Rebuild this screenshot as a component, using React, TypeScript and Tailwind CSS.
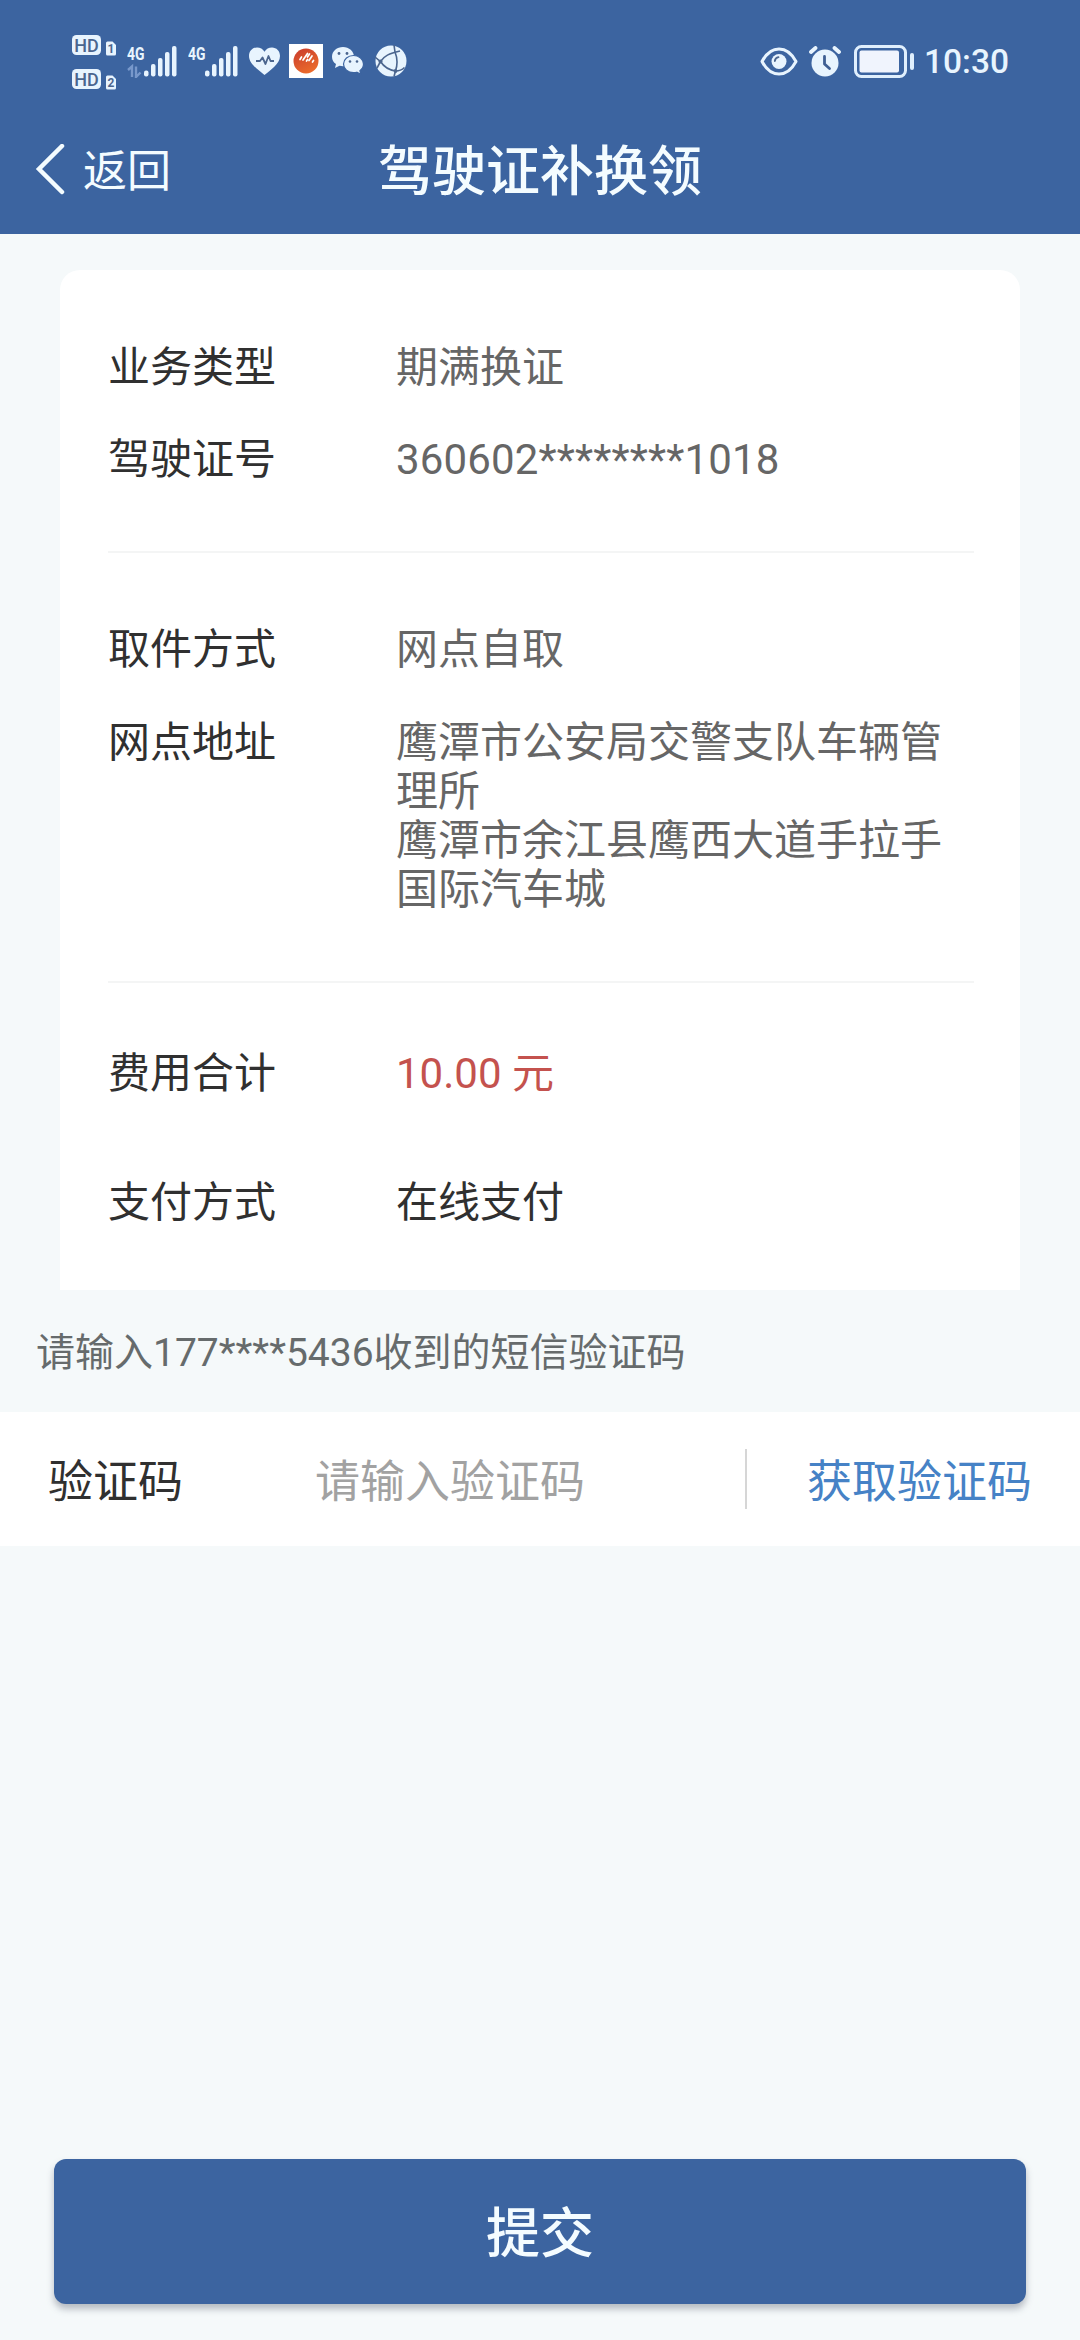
import React from "react";

const FONT = "font-[Roboto,'Noto_Sans_CJK_SC',sans-serif]";

function HdBadge({ sim }: { sim: string }) {
  return (
    <svg width="44" height="21" viewBox="0 0 44 21">
      <rect x="0" y="0" width="29" height="20" rx="4.5" fill="#e8f4fe" />
      <text x="14.500" y="16.500" textAnchor="middle" fontSize="18" fontWeight="500" fontFamily="Roboto, sans-serif" fill="#4b658e">HD</text>
      <path d="M35.500 6.500h5l3.500 3.500v9a1.500 1.500 0 0 1-1.500 1.500h-7a1.500 1.500 0 0 1-1.500-1.500v-11a1.500 1.500 0 0 1 1.500-1.500z" fill="#e8f4fe" />
      <text x="39" y="18" textAnchor="middle" fontSize="12" fontWeight="700" fontFamily="Roboto, sans-serif" fill="#4b658e">{sim}</text>
    </svg>
  );
}

function Signal({ traffic = false }: { traffic?: boolean }) {
  return (
    <svg width="51" height="38" viewBox="0 -6 51 38">
      <text x="0" y="14" fontSize="19" fontWeight="700" fontFamily="Roboto, sans-serif" fill="#e8f4fe" textLength="17.500" lengthAdjust="spacingAndGlyphs">4G</text>
      {traffic && (
        <path d="M1 24l4-3.500v10.500M9 20.500v10.500l4.500-4.500" fill="none" stroke="#7898cb" strokeWidth="2.400" />
      )}
      <g fill="#e8f4fe">
        <rect x="17" y="24.500" width="4.500" height="6" rx="2" />
        <rect x="24" y="18" width="4.500" height="12.500" rx="2" />
        <rect x="31" y="12" width="4.500" height="18.500" rx="2" />
        <rect x="38" y="6" width="4.500" height="24.500" rx="2" />
        <rect x="45" y="0" width="4.500" height="30.500" rx="2" />
      </g>
    </svg>
  );
}

function HeartIcon() {
  return (
    <svg width="31" height="29" viewBox="0 0 31 29">
      <path d="M15.500 28C10 23.500 0 17 0 9 0 4 3.500 .5 8 .5c3.200 0 6 1.600 7.500 4.200C17 2.100 19.800.5 23 .5c4.500 0 8 3.500 8 8.500 0 8-10 14.500-15.500 19z" fill="#e8f4fe" />
      <path d="M7 14h4l2.500-3.500 3 6.500 3-8 2 5H25" fill="none" stroke="#4b658e" strokeWidth="1.800" strokeLinejoin="round" />
    </svg>
  );
}

function RedAppIcon() {
  return (
    <svg width="34" height="34" viewBox="0 0 34 34">
      <defs>
        <linearGradient id="ball" x1="0" y1="0" x2="0.500" y2="1">
          <stop offset="0" stopColor="#c83a2c" />
          <stop offset="1" stopColor="#ea6a2c" />
        </linearGradient>
      </defs>
      <rect width="34" height="34" fill="#fff" />
      <circle cx="17" cy="17" r="12.500" fill="url(#ball)" />
      <path d="M11 15.500l1.500-2.500M14 16l4.500-6.500M17.500 17l1-1.500M18.500 13l2-3M20 16.500l3-4.500M23.500 18l1-1.500" stroke="#fff" strokeWidth="1.700" strokeLinecap="round" />
    </svg>
  );
}

function WechatIcon() {
  return (
    <svg width="32" height="28" viewBox="0 0 32 28">
      <path d="M11 0C5 0 0 4.200 0 9.700c0 3 1.500 5.600 4 7.400L3 21l4.500-2.300c1.200.3 2.300.5 3.500.5 6 0 11-4.200 11-9.500S17 0 11 0z" fill="#e8f4fe" />
      <path d="M21.500 8.500c-5.500 0-10 3.900-10 8.600s4.500 8.600 10 8.600c1.200 0 2.300-.2 3.300-.5l4 2-.9-3.500c2.300-1.600 3.600-3.900 3.600-6.600 0-4.700-4.500-8.600-10-8.600z" fill="#e8f4fe" stroke="#3c64a0" strokeWidth="1.200" />
      <g fill="#4b658e">
        <circle cx="7" cy="6.500" r="1.400" />
        <circle cx="15" cy="6.500" r="1.400" />
        <circle cx="18" cy="14.500" r="1.300" />
        <circle cx="25" cy="14.500" r="1.300" />
      </g>
    </svg>
  );
}

function BallIcon() {
  return (
    <svg width="32" height="32" viewBox="0 0 32 32">
      <circle cx="16" cy="16" r="15.500" fill="#e8f4fe" />
      <g fill="none" stroke="#4b658e" strokeWidth="1.600">
        <path d="M0 12l5.500 4.500C9 11 14 8.500 25 6" />
        <path d="M5.500 16.500L2 23" />
        <path d="M5.500 16.500C9 22 14 25 20.500 26c4 0 7-1.500 9-3.500" />
        <path d="M20.500 26C22.500 20 22.500 13 20 7L19 0" />
        <path d="M20.500 26L19 31.500" />
      </g>
      <circle cx="5.500" cy="16.500" r="2" fill="#4b658e" />
      <circle cx="20.500" cy="26" r="1.900" fill="#4b658e" />
    </svg>
  );
}

function EyeIcon() {
  return (
    <svg width="38" height="29" viewBox="0 0 38 29">
      <path d="M2 14.500C6 7 12 2 19 2s13 5 17 12.500C32 22 26 27 19 27S6 22 2 14.500z" fill="none" stroke="#e8f4fe" strokeWidth="3" strokeLinejoin="round" />
      <circle cx="19" cy="14.500" r="7.500" fill="#e8f4fe" />
      <path d="M14.800 14c.3-2 1.700-3.400 3.700-3.800" fill="none" stroke="#4b658e" strokeWidth="1.800" strokeLinecap="round" />
    </svg>
  );
}

function AlarmIcon() {
  return (
    <svg width="32" height="31" viewBox="0 0 32 31">
      <circle cx="16" cy="17" r="13.500" fill="#e8f4fe" />
      <path d="M2 6l4.500-4M30 6l-4.500-4" stroke="#e8f4fe" strokeWidth="3.800" strokeLinecap="round" />
      <path d="M15.500 10.500v7.500l5 4.500" fill="none" stroke="#3f5f93" strokeWidth="2.800" strokeLinecap="round" strokeLinejoin="round" />
    </svg>
  );
}

function BatteryIcon() {
  return (
    <svg width="60" height="33" viewBox="0 0 60 33">
      <rect x="1.500" y="1.500" width="50" height="30" rx="6" fill="none" stroke="#e0effd" strokeWidth="3" />
      <rect x="5.500" y="5.500" width="39.500" height="22" rx="2" fill="#f0f4fd" />
      <rect x="56" y="8" width="4" height="17" rx="2" fill="#e0effd" />
    </svg>
  );
}

function StatusBar() {
  return (
    <div className="flex h-[106px] items-start pl-[72px] pr-[71px]">
      <div className="mt-[35px] flex flex-col gap-[13px]">
        <HdBadge sim="1" />
        <HdBadge sim="2" />
      </div>
      <div className="ml-[11px] mt-10 flex gap-[10px]">
        <Signal traffic />
        <Signal />
      </div>
      <div className="ml-[10px] mt-[44px] flex h-[34px] items-center">
        <HeartIcon />
        <div className="ml-[9px]"><RedAppIcon /></div>
        <div className="ml-[9px]"><WechatIcon /></div>
        <div className="ml-[11px]"><BallIcon /></div>
      </div>
      <div className="ml-auto mt-[44px] flex h-[34px] items-center text-[#e8f4fe]">
        <EyeIcon />
        <div className="ml-[11px]"><AlarmIcon /></div>
        <div className="ml-[13px]"><BatteryIcon /></div>
        <span className="ml-[10px] pt-[2px] text-[33.500px] font-medium leading-[34px]">10:30</span>
      </div>
    </div>
  );
}

function NavBar() {
  return (
    <div className="grid h-32 grid-cols-[1fr_auto_1fr] items-center text-[#f4fcff]">
      <div className="flex items-center pl-[35px]">
        <svg width="32" height="52" viewBox="0 0 32 52">
          <path d="M27 2L4 25l23 23" fill="none" stroke="currentColor" strokeWidth="4.500" strokeLinecap="round" />
        </svg>
        <span className="ml-4 pt-[3px] text-[44px] leading-[50px]">返回</span>
      </div>
      <h1 className="pt-[5px] text-[54px] font-medium leading-[60px]">驾驶证补换领</h1>
    </div>
  );
}

type RowProps = {
  label: string;
  children: React.ReactNode;
  className?: string;
  valueStyles?: string;
};

function Row({ label, children, className = "", valueStyles = "text-[#666]" }: RowProps) {
  return (
    <div className={`flex text-[42px] leading-[49px] ${className}`}>
      <span className="w-[288px] shrink-0 text-[#303030]">{label}</span>
      <div className={`w-[560px] ${valueStyles}`}>{children}</div>
    </div>
  );
}

export default function App() {
  return (
    <div className={`flex h-[2340px] w-[1080px] flex-col bg-[#f5f9fa] ${FONT}`}>
      <header className="h-[234px] bg-[#3c64a0]">
        <StatusBar />
        <NavBar />
      </header>

      <section className="mx-[60px] mt-9 h-[1020px] rounded-t-[20px] bg-white pl-12 pr-[46px]">
        <Row label="业务类型" className="pt-[73px]">期满换证</Row>
        <Row label="驾驶证号" className="mt-[43px]" valueStyles="text-[#666] tracking-[0.15px]">360602********1018</Row>
        <div className="mt-[67px] h-[2px] bg-[#f4f5f5]" />
        <Row label="取件方式" className="mt-[72px]">网点自取</Row>
        <Row label="网点地址" className="mt-[44px]">
          <p>鹰潭市公安局交警支队车辆管理所</p>
          <p>鹰潭市余江县鹰西大道手拉手国际汽车城</p>
        </Row>
        <div className="mt-[67px] h-[2px] bg-[#f4f5f5]" />
        <Row label="费用合计" className="mt-[66px]" valueStyles="text-[#c4524e]">10.00 元</Row>
        <Row label="支付方式" className="mt-[80px]" valueStyles="text-[#303030]">在线支付</Row>
      </section>

      <p className="mt-10 pl-9 text-[39px] leading-[46px] text-[#666b6c]">请输入177****5436收到的短信验证码</p>

      <div className="mt-[36px] flex h-[134px] items-center bg-white pl-12 pr-[48px] text-[45px] leading-[52px]">
        <span className="pt-2 text-[#303030]">验证码</span>
        <span className="ml-[132px] pt-2 text-[#a2a2a2]">请输入验证码</span>
        <div className="ml-auto h-[60px] w-[2px] bg-[#d6d6d6]" />
        <button className="ml-[60px] pt-2 text-[#4682c6]">获取验证码</button>
      </div>

      <button className="mx-[54px] mb-9 mt-auto h-[145px] rounded-xl bg-[#3c64a0] pt-[6px] text-[54px] font-medium leading-[60px] text-[#f4fcff] shadow-[0_5px_7px_rgba(60,70,90,0.35)]">
        提交
      </button>
    </div>
  );
}
